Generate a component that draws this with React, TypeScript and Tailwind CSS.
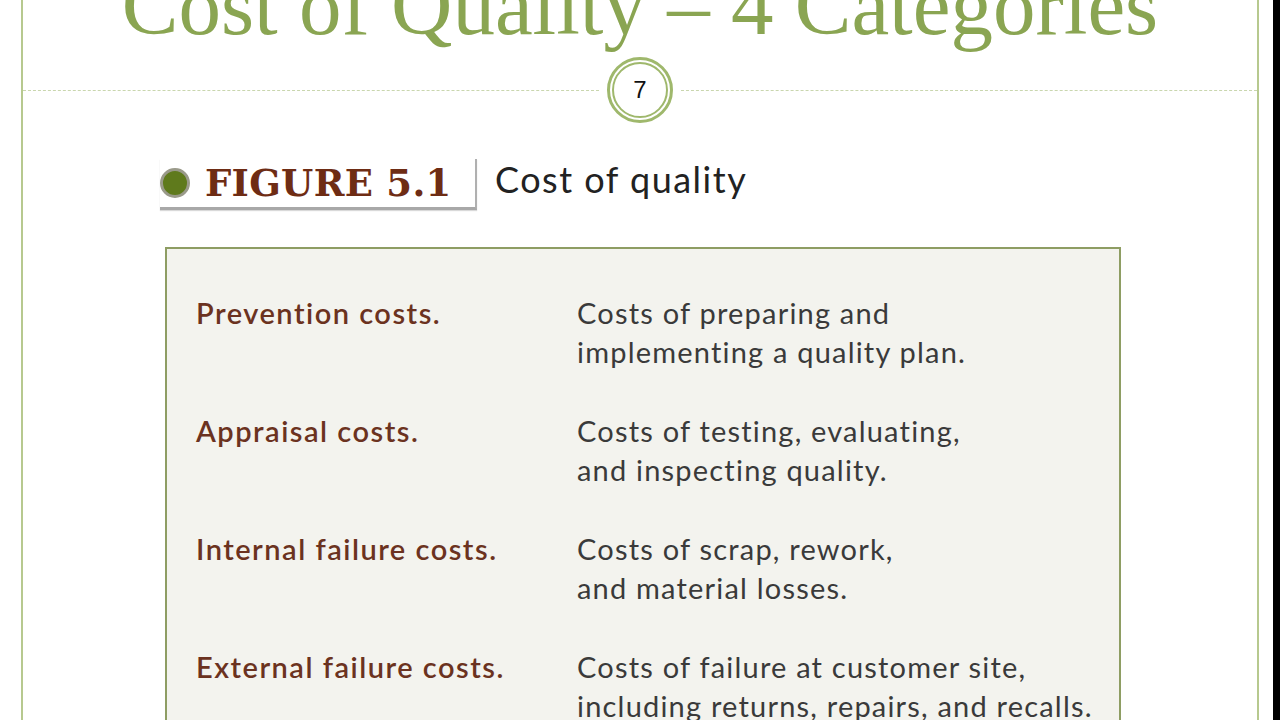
import React from "react";

const rows = [
  { label: "Prevention costs.", desc: ["Costs of preparing and", "implementing a quality plan."] },
  { label: "Appraisal costs.", desc: ["Costs of testing, evaluating,", "and inspecting quality."] },
  { label: "Internal failure costs.", desc: ["Costs of scrap, rework,", "and material losses."] },
  { label: "External failure costs.", desc: ["Costs of failure at customer site,", "including returns, repairs, and recalls."] },
];

export default function App() {
  return (
    <div className="w-[1280px] h-[720px] bg-white overflow-hidden flex">
      <div className="ml-[21px] w-[1238px] h-[720px] border-l-2 border-r-2 border-[#b7c98f] flex flex-col">
        <div
          className="mt-[-37px] h-[85px] flex justify-center text-[85px] leading-[85px] text-[#8aa552] whitespace-nowrap"
          style={{ fontFamily: '"Liberation Serif", "Times New Roman", serif' }}
        >
          Cost of Quality – 4 Categories
        </div>
        <div className="flex items-center h-[68px] mt-[9px]">
          <div className="flex-1 border-t border-dashed border-[#c9d6ae]" />
          <div className="mx-[8px] w-[66px] h-[66px] rounded-full border-[3px] border-[#9fb86c] p-[2px] bg-white">
            <div
              className="w-full h-full rounded-full border-2 border-[#9fb86c] flex items-center justify-center text-[24px] text-[#111]"
              style={{ fontFamily: '"Liberation Sans", Arial, sans-serif' }}
            >
              7
            </div>
          </div>
          <div className="flex-1 border-t border-dashed border-[#c9d6ae]" />
        </div>
        <div className="ml-[137px] mt-[36px] flex items-start">
          <div className="flex items-center h-[51px] w-[317px] border-b-[3px] border-r-2 border-b-[#a8a8a8] border-r-[#b0b0b0] shadow-[0_1px_1px_rgba(0,0,0,0.15)]">
            <div className="w-[30px] h-[30px] rounded-full bg-[#5f7a1c] border-[3px] border-[#9a9a8a]" />
            <div
              className="ml-[15px] text-[37px] leading-none font-bold text-[#6e2c14] tracking-[0.3px]"
              style={{ fontFamily: '"DejaVu Serif", "Liberation Serif", serif' }}
            >
              FIGURE 5.1
            </div>
          </div>
          <div
            className="ml-[18px] mt-[0px] text-[36px] leading-[40px] tracking-[1.5px] text-[#222]"
            style={{ fontFamily: 'Lato, "Open Sans", sans-serif' }}
          >
            Cost of quality
          </div>
        </div>
        <div
          className="ml-[142px] mt-[37px] w-[956px] flex-1 border-2 border-[#8e9d63] bg-[#f3f3ee] pl-[29px] pt-[44px] flex flex-col gap-[40px]"
          style={{ fontFamily: 'Lato, "Open Sans", sans-serif' }}
        >
          {rows.map((r) => (
            <div key={r.label} className="flex">
              <div className="w-[381px] text-[29px] leading-[39px] font-semibold tracking-[1.5px] text-[#6b3220]">{r.label}</div>
              <div className="text-[29px] leading-[39px] tracking-[1.2px] text-[#3a3a3a]">
                {r.desc.map((d) => (
                  <div key={d} className="whitespace-nowrap">{d}</div>
                ))}
              </div>
            </div>
          ))}
        </div>
      </div>
      <div className="ml-[14px] w-[7px] h-[720px] bg-black" />
    </div>
  );
}
